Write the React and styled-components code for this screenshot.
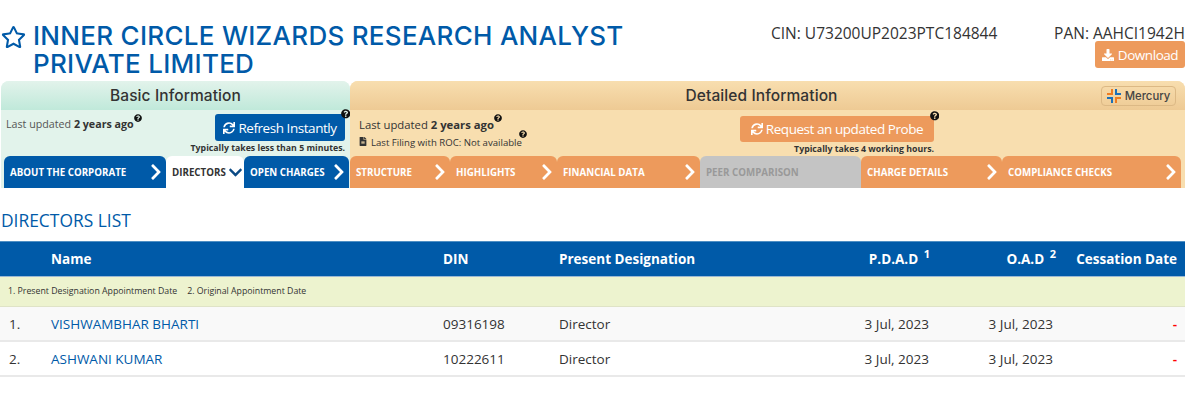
import styled, { createGlobalStyle } from "styled-components";
import { FaRegStar, FaSync, FaDownload, FaQuestionCircle, FaChevronRight, FaChevronDown, FaFileAlt } from "react-icons/fa";

const GlobalStyle = createGlobalStyle`
  html, body {
    margin: 0;
    padding: 0;
    background: #fff;
    font-family: "Open Sans", "Liberation Sans", sans-serif;
    color: #333;
  }
  * { box-sizing: border-box; }
`;

const Page = styled.div`
  width: 1185px;
  height: 405px;
  overflow: hidden;
`;

const Header = styled.header`
  display: flex;
  height: 81px;
`;

const StarIcon = styled(FaRegStar)`
  width: 25px;
  height: 24px;
  color: #005aa8;
  margin: 25px 0 0 1px;
  flex: none;
`;

const Title = styled.h1`
  width: 660px;
  margin: 22px 0 0 7px;
  font-family: Inter, "Liberation Sans", sans-serif;
  font-size: 26px;
  line-height: 28px;
  font-weight: 500;
  letter-spacing: 0.28px;
  color: #005aa8;
`;

const Cin = styled.div`
  width: 283px;
  margin: 23px 0 0 78px;
  font-size: 15.5px;
  line-height: 20px;
`;

const PanBox = styled.div`
  flex: 1;
  display: flex;
  flex-direction: column;
  align-items: flex-end;
  padding-top: 23px;
  font-size: 15.5px;
  line-height: 20px;
  white-space: nowrap;
`;

const DownloadButton = styled.div`
  display: flex;
  align-items: center;
  justify-content: center;
  gap: 4px;
  width: 90px;
  height: 27px;
  margin-top: -2px;
  background: #ed9a5c;
  border-radius: 3px;
  color: #fff;
  font-size: 13.5px;
  letter-spacing: -0.45px;
  svg { width: 12px; height: 12px; }
`;

const Panels = styled.div`
  display: flex;
  padding-left: 1px;
`;

const Panel = styled.section`
  width: ${(p) => p.$width}px;
  height: 107px;
  background: ${(p) => (p.$tone === "green" ? "#e2f3eb" : "#f8deaf")};
  border-radius: 8px 8px 0 0;
  display: flex;
  flex-direction: column;
`;

const PanelHead = styled.div`
  position: relative;
  height: 29px;
  flex: none;
  display: flex;
  align-items: center;
  justify-content: center;
  padding-right: ${(p) => p.$shift || 0}px;
  border-radius: 8px 8px 0 0;
  background: ${(p) =>
    p.$tone === "green"
      ? "linear-gradient(#e2f3eb, #c0e9da)"
      : "linear-gradient(#f8deaf, #eeca94)"};
  font-family: Inter, "Liberation Sans", sans-serif;
  font-size: 15.5px;
  font-weight: 500;
  letter-spacing: 0.1px;
  color: #333;
`;

const MercuryBadge = styled.div`
  position: absolute;
  top: 5px;
  right: 9px;
  width: 75px;
  height: 20px;
  display: flex;
  align-items: center;
  justify-content: center;
  gap: 4px;
  border: 1px solid #dcb985;
  border-radius: 4px;
  font-size: 11.3px;
  letter-spacing: 0;
  font-weight: 500;
  color: #444;
`;

const InfoRow = styled.div`
  flex: 1;
  display: flex;
  justify-content: space-between;
  padding: ${(p) => p.$pad};
`;

const Updated = styled.div`
  font-size: ${(p) => p.$size}px;
  line-height: 14px;
  color: ${(p) => p.$color || "#555"};
  margin-top: ${(p) => p.$top || 0}px;
  b { font-weight: 700; color: #333; }
`;

const Filing = styled.div`
  display: flex;
  align-items: center;
  gap: 4px;
  margin-top: 4px;
  font-size: 9.6px;
  line-height: 13px;
  color: #333;
  svg.file { width: 8px; height: 9px; margin-top: -3px; }
`;

const Help = styled(FaQuestionCircle)`
  position: relative;
  top: ${(p) => p.$lift || -6}px;
  margin-left: ${(p) => p.$pull || 0}px;
  width: 8px;
  height: 8px;
  color: #111;
`;

const ActionColumn = styled.div`
  display: flex;
  flex-direction: column;
  align-items: flex-end;
`;

const ActionButton = styled.div`
  position: relative;
  display: flex;
  align-items: center;
  justify-content: center;
  gap: 3px;
  width: ${(p) => p.$width}px;
  height: ${(p) => p.$height}px;
  border-radius: 3px;
  background: ${(p) => p.$bg};
  color: #fff;
  font-size: 13.5px;
  letter-spacing: -0.45px;
  svg.sync { width: 12px; height: 12px; }
`;

const ButtonHelp = styled(FaQuestionCircle)`
  position: absolute;
  top: -5px;
  right: -5px;
  width: 9.5px;
  height: 9.5px;
  color: #111;
`;

const Note = styled.div`
  margin-top: 1px;
  font-size: 8.75px;
  line-height: 12px;
  font-weight: 700;
  color: #333;
`;

const Tabs = styled.nav`
  display: flex;
  height: 32px;
  padding-left: ${(p) => p.$left || 0}px;
`;

const Tab = styled.div`
  width: ${(p) => p.$width}px;
  display: flex;
  align-items: center;
  justify-content: space-between;
  padding: 0 4px 0 6px;
  border-radius: 6px 6px 0 0;
  white-space: nowrap;
  font-size: 9.75px;
  font-weight: 700;
  background: ${(p) =>
    ({ blue: "#005aa8", orange: "#ed9a5c", grey: "#c4c4c4", white: "#fff" })[p.$kind]};
  color: ${(p) =>
    ({ blue: "#fff", orange: "#fff", grey: "#999", white: "#333" })[p.$kind]};
  svg { width: 12px; height: 18px; flex: none; }
  svg.down { width: 17px; height: 15px; color: #0b4a85; margin-right: -4px; }
`;

const ListTitle = styled.h2`
  margin: 21px 0 10px 1px;
  font-size: 17.4px;
  line-height: 22px;
  font-weight: 400;
  color: #005aa8;
`;

const Row = styled.div`
  display: grid;
  grid-template-columns: 51px 392px 116px 252px 1fr 124px 124px;
  align-items: center;
  height: ${(p) => p.$height}px;
  padding-right: 8px;
  background: ${(p) => p.$bg || "#fff"};
  border-bottom: 2px solid ${(p) => p.$line || "#e9e9e9"};
  font-size: 13.5px;
  color: #333;
`;

const HeadRow = styled(Row)`
  background: #005aa8;
  border-top: 1px solid #4f8fc4;
  border-bottom: 1px solid #9ab8d4;
  color: #fff;
  font-size: 13.5px;
  font-weight: 700;
`;

const LegendRow = styled.div`
  display: flex;
  align-items: center;
  gap: 10px;
  height: 30px;
  padding: 0 0 1px 8px;
  background: #edf3cf;
  border-bottom: 1px solid #dfe3c7;
  font-size: 8.75px;
  color: #333;
`;

const Cell = styled.div`
  text-align: ${(p) => (p.$end ? "right" : "left")};
  padding-left: ${(p) => p.$indent || 0}px;
  margin-right: ${(p) => p.$over || 0}px;
  white-space: nowrap;
  sup { font-size: 11px; margin-left: 2px; line-height: 0; vertical-align: 6px; }
`;

const NameLink = styled(Cell)`
  color: #005aa8;
`;

const Dash = styled(Cell)`
  color: #f00;
  font-weight: 600;
`;

function MercuryLogo() {
  return (
    <svg width="14" height="14" viewBox="0 0 14 14">
      <path d="M6 0v6H0V4h4V0z" fill="#ef7d22" />
      <path d="M8 0v6h6V4h-4V0z" fill="#1c6fb8" />
      <path d="M6 14V8H0v2h4v4z" fill="#1c6fb8" />
      <path d="M8 14V8h6v2h-4v4z" fill="#ef7d22" />
    </svg>
  );
}

const basicTabs = [
  { label: "ABOUT THE CORPORATE", width: 162, kind: "blue" },
  { label: "DIRECTORS", width: 78, kind: "white", open: true },
  { label: "OPEN CHARGES", width: 105, kind: "blue" },
];

const detailTabs = [
  { label: "STRUCTURE", width: 100, kind: "orange" },
  { label: "HIGHLIGHTS", width: 107, kind: "orange" },
  { label: "FINANCIAL DATA", width: 143, kind: "orange" },
  { label: "PEER COMPARISON", width: 161, kind: "grey" },
  { label: "CHARGE DETAILS", width: 141, kind: "orange" },
  { label: "COMPLIANCE CHECKS", width: 179, kind: "orange" },
];

const directors = [
  { id: 1, name: "VISHWAMBHAR BHARTI", din: "09316198", role: "Director", bg: "#f9f9f9" },
  { id: 2, name: "ASHWANI KUMAR", din: "10222611", role: "Director" },
];

function TabItem({ tab }) {
  return (
    <Tab $width={tab.width} $kind={tab.kind}>
      {tab.label}
      {tab.open ? <FaChevronDown className="down" /> : tab.kind !== "grey" && <FaChevronRight />}
    </Tab>
  );
}

export default function App() {
  return (
    <Page>
      <GlobalStyle />
      <Header>
        <StarIcon />
        <Title>INNER CIRCLE WIZARDS RESEARCH ANALYST PRIVATE LIMITED</Title>
        <Cin>CIN: U73200UP2023PTC184844</Cin>
        <PanBox>
          PAN: AAHCI1942H
          <DownloadButton>
            <FaDownload />
            Download
          </DownloadButton>
        </PanBox>
      </Header>

      <Panels>
        <Panel $width={349} $tone="green">
          <PanelHead $tone="green">Basic Information</PanelHead>
          <InfoRow $pad="4px 5px 0 5px">
            <Updated $size={10.7} $top={3}>
              Last updated <b>2 years ago</b>
              <Help />
            </Updated>
            <ActionColumn>
              <ActionButton $width={130} $height={27} $bg="#005aa8">
                <FaSync className="sync" />
                Refresh Instantly
                <ButtonHelp />
              </ActionButton>
              <Note>Typically takes less than 5 minutes.</Note>
            </ActionColumn>
          </InfoRow>
          <Tabs $left={3}>
            {basicTabs.map((tab) => (
              <TabItem key={tab.label} tab={tab} />
            ))}
          </Tabs>
        </Panel>

        <Panel $width={835} $tone="orange">
          <PanelHead $tone="orange" $shift={12}>
            Detailed Information
            <MercuryBadge>
              <MercuryLogo />
              Mercury
            </MercuryBadge>
          </PanelHead>
          <InfoRow $pad="6px 251px 0 9px">
            <div>
              <Updated $size={11.3} $color="#333" $top={2}>
                Last updated <b>2 years ago</b>
                <Help $lift={-7} />
              </Updated>
              <Filing>
                <FaFileAlt className="file" />
                <span>
                  Last Filing with ROC: Not available
                  <Help $lift={-8} $pull={-3} />
                </span>
              </Filing>
            </div>
            <ActionColumn>
              <ActionButton $width={194} $height={26} $bg="#ed9a5c">
                <FaSync className="sync" />
                Request an updated Probe
                <ButtonHelp />
              </ActionButton>
              <Note>Typically takes 4 working hours.</Note>
            </ActionColumn>
          </InfoRow>
          <Tabs>
            {detailTabs.map((tab) => (
              <TabItem key={tab.label} tab={tab} />
            ))}
          </Tabs>
        </Panel>
      </Panels>

      <ListTitle>DIRECTORS LIST</ListTitle>

      <HeadRow $height={36}>
        <Cell />
        <Cell>Name</Cell>
        <Cell>DIN</Cell>
        <Cell>Present Designation</Cell>
        <Cell $end $over={-1}>
          P.D.A.D <sup>1</sup>
        </Cell>
        <Cell $end $over={-3}>
          O.A.D <sup>2</sup>
        </Cell>
        <Cell $end>Cessation Date</Cell>
      </HeadRow>
      <LegendRow>
        <span>1. Present Designation Appointment Date</span>
        <span>2. Original Appointment Date</span>
      </LegendRow>
      {directors.map((d) => (
        <Row key={d.id} $height={35} $bg={d.bg}>
          <Cell $indent={9}>{d.id}.</Cell>
          <NameLink>{d.name}</NameLink>
          <Cell>{d.din}</Cell>
          <Cell>{d.role}</Cell>
          <Cell $end>3 Jul, 2023</Cell>
          <Cell $end>3 Jul, 2023</Cell>
          <Dash $end>-</Dash>
        </Row>
      ))}
    </Page>
  );
}
